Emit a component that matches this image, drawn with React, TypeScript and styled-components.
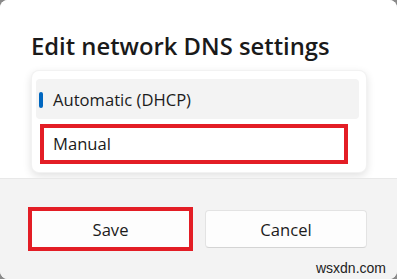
import styled, { createGlobalStyle } from "styled-components";

const GlobalStyle = createGlobalStyle`
  * {
    box-sizing: border-box;
  }

  html, body {
    margin: 0;
    padding: 0;
    background-color: #8a8a8a;
  }
`;

const Dialog = styled.div`
  position: relative;
  width: 397px;
  height: 279px;
  border-radius: 8px;
  overflow: hidden;
  background-color: #ffffff;
  display: flex;
  flex-direction: column;
  font-family: "Open Sans", "Noto Sans", sans-serif;
  color: #1b1b1b;
`;

const Body = styled.section`
  height: 178px;
  padding: 32px 30px 0 31px;
  background-color: #ffffff;
`;

const Title = styled.h1`
  margin: 0;
  font-size: 23.8px;
  font-weight: 600;
  line-height: 29px;
  color: #1a1a1a;
`;

const Menu = styled.div`
  margin-top: 9px;
  width: 336px;
  padding: 8px 7px 9px 4px;
  display: flex;
  flex-direction: column;
  gap: 4px;
  background-color: #ffffff;
  border-radius: 8px;
  border: 1px solid rgba(0, 0, 0, 0.05);
  box-shadow: 0 3px 8px rgba(0, 0, 0, 0.12);
`;

const Option = styled.div<{ $selected?: boolean; $marked?: boolean }>`
  position: relative;
  height: 40px;
  display: flex;
  align-items: center;
  padding-left: 17px;
  border-radius: 4px;
  font-size: 16.6px;
  color: #1b1b1b;
  background-color: ${(props) => (props.$selected ? "#f3f3f3" : "transparent")};

  &:before {
    content: '';
    display: ${(props) => (props.$selected ? "block" : "none")};
    position: absolute;
    left: 3px;
    top: 13px;
    width: 4px;
    height: 16px;
    border-radius: 2px;
    background-color: #0067c0;
  }

  &:after {
    content: '';
    display: ${(props) => (props.$marked ? "block" : "none")};
    position: absolute;
    left: 4px;
    right: 11px;
    top: 1px;
    bottom: -1px;
    border: 4px solid #e31d25;
  }
`;

const Footer = styled.footer`
  flex: 1;
  display: flex;
  align-items: center;
  gap: 12px;
  padding: 0 30px 0 28px;
  background-color: #f3f3f3;
  border-top: 1px solid #e8e8e8;
`;

const Button = styled.button<{ $marked?: boolean }>`
  width: ${(props) => (props.$marked ? "165px" : "162px")};
  height: ${(props) => (props.$marked ? "44px" : "38px")};
  margin: 0;
  padding: 0;
  font-family: inherit;
  font-size: 16.6px;
  color: #1b1b1b;
  background-color: #fdfdfd;
  border: ${(props) => (props.$marked ? "4px solid #e31d25" : "1px solid #e3e3e3")};
  border-radius: ${(props) => (props.$marked ? "0" : "4px")};
  border-bottom-color: ${(props) => (props.$marked ? "#e31d25" : "#d4d4d4")};
`;

const Watermark = styled.span`
  position: absolute;
  right: 11px;
  bottom: 3px;
  font-family: "Liberation Sans", Arial, sans-serif;
  font-size: 14px;
  color: #222222;
`;

export default function App() {
  return (
    <>
      <GlobalStyle />
      <Dialog>
        <Body>
          <Title>Edit network DNS settings</Title>
          <Menu>
            <Option $selected>Automatic (DHCP)</Option>
            <Option $marked>Manual</Option>
          </Menu>
        </Body>
        <Footer>
          <Button $marked>Save</Button>
          <Button>Cancel</Button>
        </Footer>
        <Watermark>wsxdn.com</Watermark>
      </Dialog>
    </>
  );
}
